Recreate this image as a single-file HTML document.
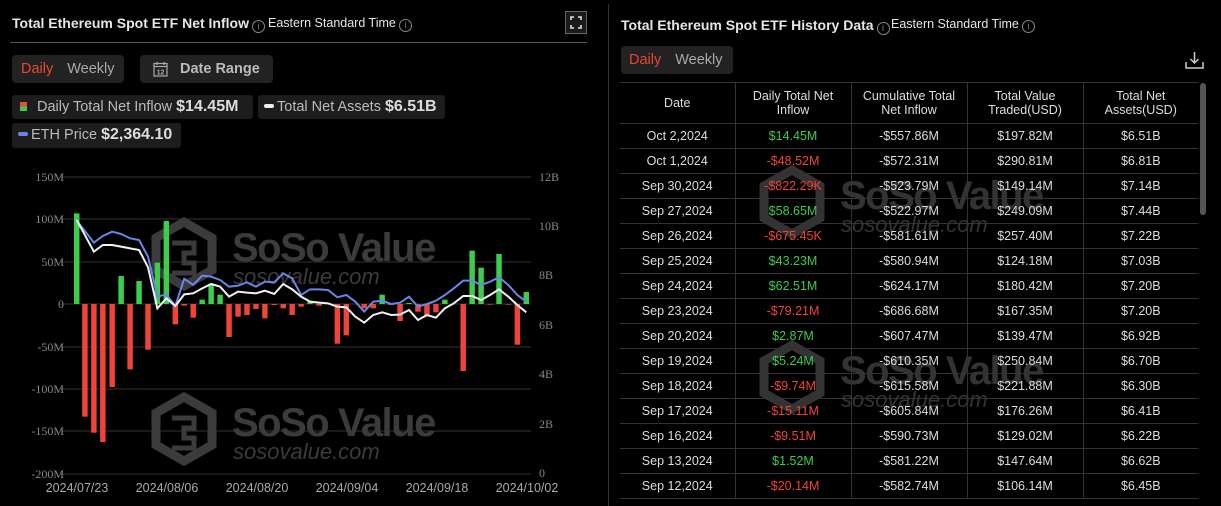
<!DOCTYPE html>
<html><head><meta charset="utf-8"><style>
*{margin:0;padding:0;box-sizing:border-box}
html,body{width:1221px;height:506px;overflow:hidden}
body{background:#000;font-family:"Liberation Sans",sans-serif;color:#ddd;position:relative}
.a{position:absolute;white-space:nowrap}
.t{font-size:14px;font-weight:bold;color:#e6e6e6}
.s{font-size:12.5px;color:#e6e6e6}
.i{display:inline-block;width:13px;height:13px;border:1px solid #888;border-radius:50%;font-size:9px;line-height:11px;text-align:center;color:#888;vertical-align:-1px;margin-left:3px;font-weight:normal}
.box{background:#222;border-radius:4px}
.pill{background:#1d1d1d;border-radius:3px;font-size:14.5px;color:#bbb;height:24px;line-height:24px;padding:0 6px}
.pill b{color:#ddd;font-size:16px}
table{border-collapse:collapse;font-size:12.5px;color:#ddd}
td{border-bottom:1px solid #333;border-right:1px solid #333;text-align:center;height:25px}
td:last-child{border-right:none}
.g{color:#3ccc4e}.r{color:#f0443a}
</style></head><body>
<div class="a t" style="left:12px;top:15px">Total Ethereum Spot ETF Net Inflow<span class="i">i</span></div>
<div class="a s" style="left:268px;top:16px">Eastern Standard Time<span class="i">i</span></div>
<div class="a" style="left:565px;top:11px;width:22px;height:23px;border:1px solid #666;background:#1a1a1a"><svg width="20" height="21" viewBox="0 0 20 21" fill="none" stroke="#ddd" stroke-width="1.6"><path d="M5 8V5h3M12 5h3v3M15 13v3h-3M8 16H5v-3"/></svg></div>
<div class="a" style="left:10px;top:42px;width:577px;height:1px;background:#555"></div>
<div class="a box" style="left:12px;top:55px;width:112px;height:28px;font-size:14.5px;line-height:28px"><span style="color:#e8472f;margin-left:9px">Daily</span><span style="color:#aaa;margin-left:14px">Weekly</span></div>
<div class="a box" style="left:140px;top:55px;width:133px;height:28px;font-size:14.5px;line-height:28px;font-weight:bold;color:#bbb"><svg style="position:absolute;left:13px;top:6px" width="15" height="16" viewBox="0 0 15 16" fill="none" stroke="#aaa" stroke-width="1.2"><rect x="1" y="2.5" width="13" height="12.5"/><path d="M1 5.5h13M4 1v3M11 1v3"/><text x="7.5" y="13.5" font-size="7" fill="#aaa" stroke="none" text-anchor="middle" font-family="Liberation Sans">12</text></svg><span style="margin-left:40px">Date Range</span></div>
<div class="a pill" style="left:12px;top:95px;width:241px"><span style="display:inline-block;width:7px;height:9px;background:linear-gradient(#e84c3d 50%,#3ccc4e 50%);margin:0 10px 0 2px"></span>Daily Total Net Inflow <b>$14.45M</b></div>
<div class="a pill" style="left:258px;top:95px;width:187px"><span style="display:inline-block;width:10px;height:4px;background:#eee;border-radius:2px;vertical-align:3px;margin-right:3px"></span>Total Net Assets <b>$6.51B</b></div>
<div class="a pill" style="left:12px;top:123px;width:169px;height:25px"><span style="display:inline-block;width:10px;height:4px;background:#6b85e6;border-radius:2px;vertical-align:3px;margin-right:3px"></span>ETH Price <b>$2,364.10</b></div>
<div class="a" style="left:608px;top:4px;width:1px;height:502px;background:#333"></div>

<svg class="a" style="left:0;top:0" width="608" height="506">
<g font-family="Liberation Serif" font-size="12" fill="#888">
<g stroke="#333" stroke-width="1">
<line x1="60" y1="177" x2="531" y2="177"/><line x1="60" y1="219" x2="531" y2="219"/><line x1="60" y1="262" x2="531" y2="262"/><line x1="60" y1="304" x2="531" y2="304"/><line x1="60" y1="347" x2="531" y2="347"/><line x1="60" y1="389" x2="531" y2="389"/><line x1="60" y1="431" x2="531" y2="431"/><line x1="60" y1="474" x2="531" y2="474"/></g>
<g text-anchor="end"><text x="64" y="181">150M</text><text x="64" y="223">100M</text><text x="64" y="266">50M</text><text x="64" y="308">0</text><text x="64" y="351">-50M</text><text x="64" y="393">-100M</text><text x="64" y="435">-150M</text><text x="64" y="478">-200M</text></g>
<text x="539" y="181">12B</text><text x="539" y="230">10B</text><text x="539" y="279">8B</text><text x="539" y="329">6B</text><text x="539" y="378">4B</text><text x="539" y="428">2B</text><text x="539" y="477">0</text>
<g font-family="Liberation Sans" font-size="12.5" fill="#aaa" text-anchor="middle"><text x="77" y="492">2024/07/23</text><text x="167" y="492">2024/08/06</text><text x="257" y="492">2024/08/20</text><text x="347" y="492">2024/09/04</text><text x="437" y="492">2024/09/18</text><text x="527" y="492">2024/10/02</text></g>
</g>
<g id="wm" fill="#3b3b3b">
<path d="M184 222l28 16v32l-28 16-28-16v-32z" fill="none" stroke="#3b3b3b" stroke-width="9"/>
<path d="M172 243h22v10h-10v10h10v10h-22" fill="none" stroke="#3b3b3b" stroke-width="5"/>
<text x="232" y="261" font-family="Liberation Sans" font-weight="bold" font-size="40" letter-spacing="-1.5">SoSo Value</text>
<text x="233" y="284" font-family="Liberation Sans" font-style="italic" font-size="22">sosovalue.com</text>
</g>
<use href="#wm" y="175"/>
<g transform="translate(0,160) scale(0.38956,0.33333)">
<g fill="#3ccc4e">
<rect x="190" y="160" width="14" height="272"/><rect x="304" y="348" width="14" height="84"/><rect x="350" y="363" width="14" height="69"/><rect x="397" y="308" width="14" height="124"/><rect x="420" y="183" width="14" height="249"/><rect x="512" y="419" width="14" height="13"/><rect x="535" y="371" width="14" height="61"/><rect x="558" y="404" width="14" height="28"/><rect x="789" y="424" width="14" height="8"/><rect x="974" y="404" width="14" height="28"/><rect x="1043" y="429" width="14" height="3"/><rect x="1135" y="419" width="14" height="13"/><rect x="1205" y="272" width="14" height="160"/><rect x="1228" y="323" width="14" height="109"/><rect x="1274" y="282" width="14" height="150"/><rect x="1344" y="396" width="14" height="36"/></g>
<g fill="#f0443a">
<rect x="211" y="432" width="14" height="338"/><rect x="234" y="432" width="14" height="386"/><rect x="257" y="432" width="14" height="414"/><rect x="281" y="432" width="14" height="249"/><rect x="327" y="432" width="14" height="196"/><rect x="373" y="432" width="14" height="137"/><rect x="443" y="432" width="14" height="61"/><rect x="466" y="432" width="14" height="5"/><rect x="489" y="432" width="14" height="41"/><rect x="581" y="432" width="14" height="99"/><rect x="604" y="432" width="14" height="38"/><rect x="627" y="432" width="14" height="33"/><rect x="650" y="432" width="14" height="15"/><rect x="673" y="432" width="14" height="43"/><rect x="697" y="432" width="14" height="3"/><rect x="720" y="432" width="14" height="13"/><rect x="743" y="432" width="14" height="33"/><rect x="766" y="432" width="14" height="8"/><rect x="812" y="432" width="14" height="5"/><rect x="859" y="432" width="14" height="119"/><rect x="882" y="432" width="14" height="94"/><rect x="928" y="432" width="14" height="13"/><rect x="951" y="432" width="14" height="13"/><rect x="997" y="432" width="14" height="3"/><rect x="1020" y="432" width="14" height="51"/><rect x="1066" y="432" width="14" height="23"/><rect x="1089" y="432" width="14" height="38"/><rect x="1112" y="432" width="14" height="25"/><rect x="1182" y="432" width="14" height="201"/><rect x="1251" y="432" width="14" height="2"/><rect x="1298" y="432" width="14" height="2"/><rect x="1321" y="432" width="14" height="122"/></g>
<polyline fill="none" stroke="#6b85e6" stroke-width="2" vector-effect="non-scaling-stroke" points="197,182 241,248 264,228 288,215 311,222 334,235 357,240 380,290 404,410 427,403 450,438 473,356 496,375 519,347 542,350 565,360 588,380 611,377 634,367 657,380 680,365 704,367 727,340 750,355 773,405 796,388 819,388 842,390 866,412 889,405 912,425 935,455 958,425 981,422 1004,432 1027,428 1050,410 1073,440 1096,432 1119,422 1142,405 1165,385 1189,362 1212,362 1235,375 1258,365 1281,352 1305,375 1328,405 1351,425"/>
<polyline fill="none" stroke="#f2f2f2" stroke-width="2" vector-effect="non-scaling-stroke" points="197,180 241,275 264,255 288,255 334,265 357,270 380,322 404,445 427,415 450,438 473,403 496,400 519,385 542,372 565,380 588,410 611,395 634,398 657,400 680,392 704,402 727,372 750,388 773,410 796,425 819,428 842,430 866,440 889,442 912,470 935,488 958,465 981,457 1004,465 1027,464 1050,450 1073,480 1096,465 1119,473 1142,445 1165,430 1189,408 1212,408 1235,420 1258,405 1281,388 1305,410 1328,435 1351,457"/>
</g>
</svg>

<div class="a t" style="left:621px;top:17px">Total Ethereum Spot ETF History Data<span class="i">i</span></div>
<div class="a s" style="left:891px;top:17px">Eastern Standard Time<span class="i">i</span></div>
<div class="a box" style="left:621px;top:46px;width:112px;height:28px;font-size:14.5px;line-height:28px"><span style="color:#e8472f;margin-left:8px">Daily</span><span style="color:#aaa;margin-left:14px">Weekly</span></div>
<svg class="a" style="left:1185px;top:51px" width="19" height="19" viewBox="0 0 19 19" fill="none" stroke="#ccc" stroke-width="1.5"><path d="M1 11v6h17v-6M9.5 1v11M5.5 8l4 4 4-4"/></svg>
<svg class="a" style="left:0;top:0" width="1221" height="506">
<g fill="#333">
<g transform="translate(608,-52)"><path d="M184 222l28 16v32l-28 16-28-16v-32z" fill="none" stroke="#333" stroke-width="9"/><text x="232" y="261" font-family="Liberation Sans" font-weight="bold" font-size="40" letter-spacing="-1.5">SoSo Value</text><text x="233" y="284" font-family="Liberation Sans" font-style="italic" font-size="22">sosovalue.com</text></g>
<g transform="translate(608,123)"><path d="M184 222l28 16v32l-28 16-28-16v-32z" fill="none" stroke="#333" stroke-width="9"/><text x="232" y="261" font-family="Liberation Sans" font-weight="bold" font-size="40" letter-spacing="-1.5">SoSo Value</text><text x="233" y="284" font-family="Liberation Sans" font-style="italic" font-size="22">sosovalue.com</text></g>
</g></svg>
<div class="a" style="left:620px;top:82px;width:578px;height:1px;background:#333"></div>
<div class="a" style="left:1200px;top:83px;width:6px;height:132px;background:#555;border-radius:3px"></div>
<table class="a" style="left:620px;top:83px;width:578px">
<tr style="height:40px"><td style="width:115px;height:40px">Date</td><td style="width:116px">Daily Total Net<br>Inflow</td><td style="width:116px">Cumulative Total<br>Net Inflow</td><td style="width:116px">Total Value<br>Traded(USD)</td><td>Total Net<br>Assets(USD)</td></tr>
<tr><td>Oct 2,2024</td><td class="g">$14.45M</td><td>-$557.86M</td><td>$197.82M</td><td>$6.51B</td></tr>
<tr><td>Oct 1,2024</td><td class="r">-$48.52M</td><td>-$572.31M</td><td>$290.81M</td><td>$6.81B</td></tr>
<tr><td>Sep 30,2024</td><td class="r">-$822.29K</td><td>-$523.79M</td><td>$149.14M</td><td>$7.14B</td></tr>
<tr><td>Sep 27,2024</td><td class="g">$58.65M</td><td>-$522.97M</td><td>$249.09M</td><td>$7.44B</td></tr>
<tr><td>Sep 26,2024</td><td class="r">-$675.45K</td><td>-$581.61M</td><td>$257.40M</td><td>$7.22B</td></tr>
<tr><td>Sep 25,2024</td><td class="g">$43.23M</td><td>-$580.94M</td><td>$124.18M</td><td>$7.03B</td></tr>
<tr><td>Sep 24,2024</td><td class="g">$62.51M</td><td>-$624.17M</td><td>$180.42M</td><td>$7.20B</td></tr>
<tr><td>Sep 23,2024</td><td class="r">-$79.21M</td><td>-$686.68M</td><td>$167.35M</td><td>$7.20B</td></tr>
<tr><td>Sep 20,2024</td><td class="g">$2.87M</td><td>-$607.47M</td><td>$139.47M</td><td>$6.92B</td></tr>
<tr><td>Sep 19,2024</td><td class="g">$5.24M</td><td>-$610.35M</td><td>$250.84M</td><td>$6.70B</td></tr>
<tr><td>Sep 18,2024</td><td class="r">-$9.74M</td><td>-$615.58M</td><td>$221.88M</td><td>$6.30B</td></tr>
<tr><td>Sep 17,2024</td><td class="r">-$15.11M</td><td>-$605.84M</td><td>$176.26M</td><td>$6.41B</td></tr>
<tr><td>Sep 16,2024</td><td class="r">-$9.51M</td><td>-$590.73M</td><td>$129.02M</td><td>$6.22B</td></tr>
<tr><td>Sep 13,2024</td><td class="g">$1.52M</td><td>-$581.22M</td><td>$147.64M</td><td>$6.62B</td></tr>
<tr><td>Sep 12,2024</td><td class="r">-$20.14M</td><td>-$582.74M</td><td>$106.14M</td><td>$6.45B</td></tr>
</table>
</body></html>
